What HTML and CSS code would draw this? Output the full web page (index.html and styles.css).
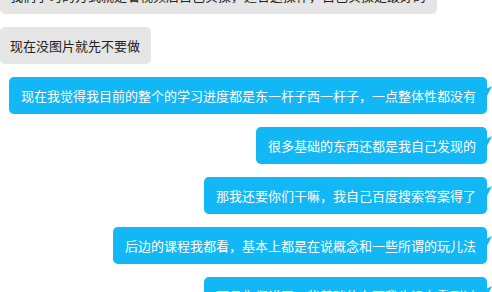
FILE: index.html
```html
<!DOCTYPE html>
<html lang="zh-CN">
<head>
<meta charset="utf-8">
<link rel="stylesheet" href="styles.css">
</head>
<body>
<div class="chat">
  <div class="row left"><div class="bubble gray">我们学习的方式就是看视频后自己实操，适合这操作，自己实操是最好的</div></div>
  <div class="row left"><div class="bubble gray">现在没图片就先不要做</div></div>
  <div class="row right"><div class="bubble blue">现在我觉得我目前的整个的学习进度都是东一杆子西一杆子，一点整体性都没有</div></div>
  <div class="row right"><div class="bubble blue">很多基础的东西还都是我自己发现的</div></div>
  <div class="row right"><div class="bubble blue">那我还要你们干嘛，我自己百度搜索答案得了</div></div>
  <div class="row right"><div class="bubble blue">后边的课程我都看，基本上都是在说概念和一些所谓的玩儿法</div></div>
  <div class="row right"><div class="bubble blue">而且你们讲了一些基础的东西我也没有看到过</div></div>
</div>
</body>
</html>
```
FILE: styles.css
```css
html, body {
  margin: 0;
  padding: 0;
  background: #ffffff;
  overflow: hidden;
}
body {
  width: 492px;
  height: 292px;
  font-family: "Noto Sans CJK SC", "Microsoft YaHei", sans-serif;
  font-size: 13px;
}
.chat {
  display: flex;
  flex-direction: column;
  gap: 13px;
  margin-top: -23px;
}
.row {
  display: flex;
}
.row.left {
  justify-content: flex-start;
}
.row.right {
  justify-content: flex-end;
  padding-right: 5px;
}
.bubble {
  position: relative;
  height: 37px;
  box-sizing: border-box;
  padding: 9px 11px 0 12px;
  line-height: 19px;
  border-radius: 5px;
  white-space: nowrap;
}
.gray {
  background: #e5e5e5;
  color: #222222;
  padding-left: 10px;
}
.blue {
  background: #12b7f5;
  color: #ffffff;
}
.blue::after {
  content: "";
  position: absolute;
  right: -5px;
  top: 9px;
  width: 5px;
  height: 10px;
  background: #12b7f5;
  clip-path: polygon(0 25%, 100% 0, 0 100%);
}
```
